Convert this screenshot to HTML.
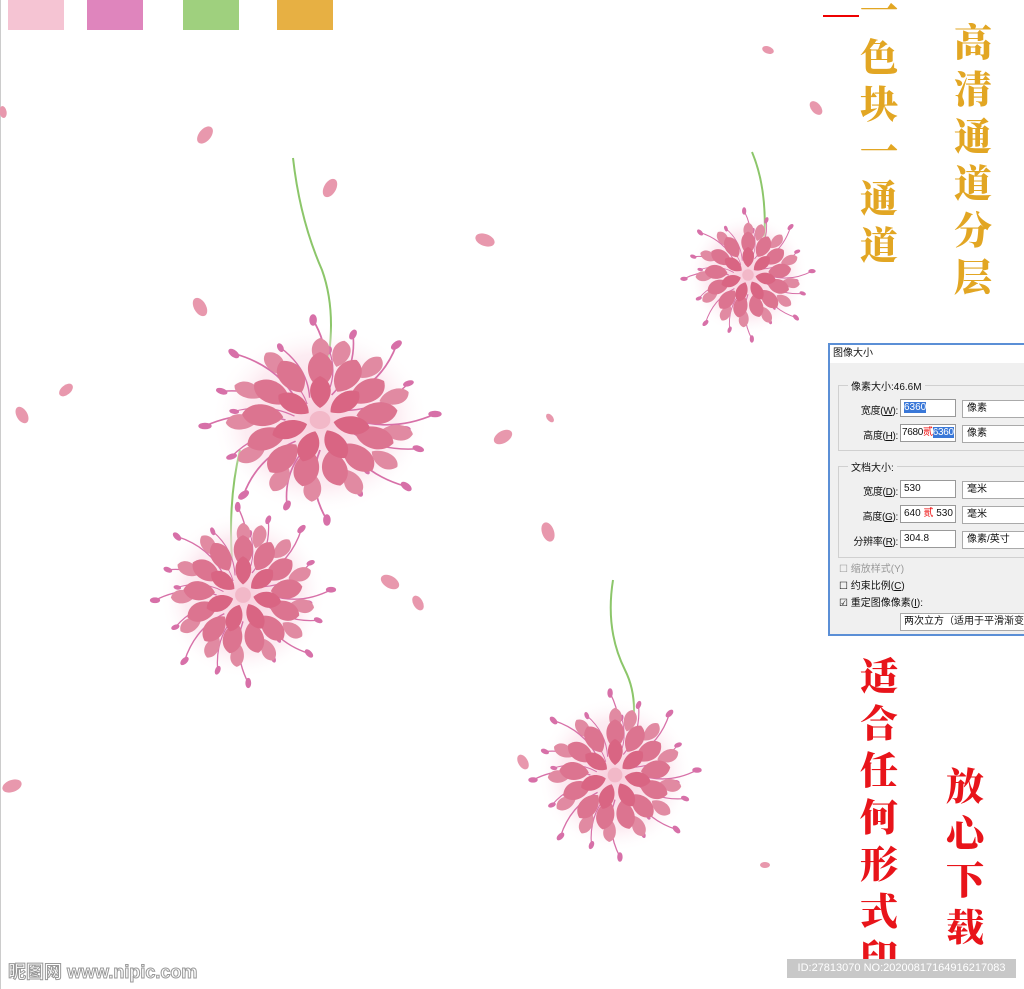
<!DOCTYPE html>
<html><head><meta charset="utf-8"><style>
body{margin:0;width:1024px;height:989px;overflow:hidden;background:#fff;position:relative;font-family:"Liberation Sans","Noto Sans CJK SC",sans-serif}
.sw{position:absolute;top:0;height:30px;width:56px}
.col{position:absolute;font-family:"Noto Serif CJK SC",serif;font-weight:900;font-size:38px;line-height:47px;width:46px;text-align:center}
.dlg{position:absolute;left:828px;top:343px;width:200px;height:293px;background:#f0f0f0;border:2px solid #5b8fd6;box-sizing:border-box;font-size:10px;color:#111;white-space:nowrap}
.dlg .t{background:#fff;height:18px;line-height:18px;padding-left:3px}
.fs{position:absolute;border:1px solid #d0d0d0}
.lg{position:absolute;background:#f0f0f0;padding:0 3px}
.lb{position:absolute;text-align:right;width:65px;letter-spacing:-0.3px}
.in{position:absolute;background:#fff;border:1px solid #999;height:18px;line-height:16px;padding-left:3px;box-sizing:border-box;overflow:hidden}
.sel{position:absolute;background:#fff;border:1px solid #aaa;height:18px;line-height:16px;padding-left:4px;box-sizing:border-box;width:70px}
.hl{background:#3a78d8;color:#fff}
</style></head><body>
<div class="sw" style="left:8px;background:#f5c4d3"></div>
<div class="sw" style="left:87px;background:#df85bd"></div>
<div class="sw" style="left:183px;background:#9fd07e"></div>
<div class="sw" style="left:277px;background:#e7b043"></div>
<div style="position:absolute;left:823px;top:15px;width:36px;height:2px;background:#e00"></div>
<div style="position:absolute;left:0;top:0;width:1px;height:989px;background:#ccc"></div>

<svg width="1024" height="989" style="position:absolute;left:0;top:0">
<defs>
<radialGradient id="gl"><stop offset="0" stop-color="#f7c8d8" stop-opacity=".9"/><stop offset=".7" stop-color="#fbe0ea" stop-opacity=".6"/><stop offset="1" stop-color="#fff" stop-opacity="0"/></radialGradient>
<g id="fl">
<circle r="95" fill="url(#gl)"/>
<g stroke="#d770a8" stroke-width="1.6" fill="#d770a8">
<g id="sp"><path d="M0 -30 Q12 -65 -6 -100" fill="none"/><ellipse cx="-6" cy="-100" rx="2.5" ry="5"/></g>
<use href="#sp" transform="rotate(22) scale(.9)"/><use href="#sp" transform="rotate(45)"/><use href="#sp" transform="rotate(68) scale(.85)"/><use href="#sp" transform="rotate(90)"/><use href="#sp" transform="rotate(112) scale(.9)"/><use href="#sp" transform="rotate(135)"/><use href="#sp" transform="rotate(158) scale(.8)"/><use href="#sp" transform="rotate(180)"/><use href="#sp" transform="rotate(202) scale(.9)"/><use href="#sp" transform="rotate(225)"/><use href="#sp" transform="rotate(248) scale(.85)"/><use href="#sp" transform="rotate(270)"/><use href="#sp" transform="rotate(292) scale(.9)"/><use href="#sp" transform="rotate(315)"/><use href="#sp" transform="rotate(338) scale(.8)"/>
<use href="#sp" transform="rotate(10) scale(.7)"/><use href="#sp" transform="rotate(100) scale(.75)"/><use href="#sp" transform="rotate(190) scale(.7)"/><use href="#sp" transform="rotate(280) scale(.75)"/><use href="#sp" transform="rotate(-35) scale(.65)"/><use href="#sp" transform="rotate(145) scale(.65)"/>
</g>
<g fill="#e18aa2">
<g id="p3"><path d="M0 -55 C10 -62 12 -78 0 -82 C-10 -78 -9 -62 0 -55Z"/></g>
<use href="#p3" transform="rotate(15)"/><use href="#p3" transform="rotate(40)"/><use href="#p3" transform="rotate(70)"/><use href="#p3" transform="rotate(100)"/><use href="#p3" transform="rotate(125)"/><use href="#p3" transform="rotate(155)"/><use href="#p3" transform="rotate(185)"/><use href="#p3" transform="rotate(210)"/><use href="#p3" transform="rotate(240)"/><use href="#p3" transform="rotate(268)"/><use href="#p3" transform="rotate(295)"/><use href="#p3" transform="rotate(325)"/>
</g>
<g fill="#dc7490">
<g id="pe"><path d="M0 -32 C14 -40 16 -62 0 -68 C-15 -62 -13 -40 0 -32Z"/></g>
<use href="#pe" transform="rotate(28)"/><use href="#pe" transform="rotate(55)"/><use href="#pe" transform="rotate(82)"/><use href="#pe" transform="rotate(110)"/><use href="#pe" transform="rotate(138)"/><use href="#pe" transform="rotate(165)"/><use href="#pe" transform="rotate(193)"/><use href="#pe" transform="rotate(220)"/><use href="#pe" transform="rotate(248)"/><use href="#pe" transform="rotate(275)"/><use href="#pe" transform="rotate(303)"/><use href="#pe" transform="rotate(330)"/>
</g>
<g fill="#d96583">
<g id="p2"><path d="M0 -12 C12 -20 13 -38 0 -44 C-12 -38 -11 -20 0 -12Z"/></g>
<use href="#p2" transform="rotate(50)"/><use href="#p2" transform="rotate(100)"/><use href="#p2" transform="rotate(150)"/><use href="#p2" transform="rotate(200)"/><use href="#p2" transform="rotate(250)"/><use href="#p2" transform="rotate(305)"/>
</g>
<circle r="9" fill="#f2b8c8"/>
</g>
<ellipse id="pt" rx="10" ry="6" fill="#e898ad"/>
</defs>
<g fill="none" stroke="#8cc66a" stroke-width="2">
<path d="M293 158 Q300 220 322 270 Q340 320 322 390"/>
<path d="M240 450 Q228 500 232 560"/>
<path d="M752 152 Q768 190 764 245"/>
<path d="M613 580 Q605 630 625 670 Q640 700 630 740"/>
</g>
<use href="#fl" transform="translate(320 420) scale(1.15,1.0)"/>
<use href="#fl" transform="translate(243 595) scale(0.88)"/>
<use href="#fl" transform="translate(748 275) scale(0.64)"/>
<use href="#fl" transform="translate(615 775) scale(0.82)"/>
<use href="#pt" transform="translate(205 135) rotate(-50)"/>
<use href="#pt" transform="translate(330 188) rotate(-60)"/>
<use href="#pt" transform="translate(485 240) rotate(20)"/>
<use href="#pt" transform="translate(200 307) rotate(60)"/>
<use href="#pt" transform="translate(66 390) rotate(-40) scale(.8)"/>
<use href="#pt" transform="translate(22 415) rotate(60) scale(.9)"/>
<use href="#pt" transform="translate(503 437) rotate(-30)"/>
<use href="#pt" transform="translate(548 532) rotate(70)"/>
<use href="#pt" transform="translate(390 582) rotate(30)"/>
<use href="#pt" transform="translate(418 603) rotate(60) scale(.8)"/>
<use href="#pt" transform="translate(523 762) rotate(60) scale(.8)"/>
<use href="#pt" transform="translate(12 786) rotate(-20)"/>
<use href="#pt" transform="translate(768 50) rotate(20) scale(.6)"/>
<use href="#pt" transform="translate(816 108) rotate(50) scale(.8)"/>
<use href="#pt" transform="translate(550 418) rotate(50) scale(.5)"/>
<use href="#pt" transform="translate(765 865) scale(.5)"/>
<use href="#pt" transform="translate(3 112) rotate(80) scale(.6)"/>
</svg>

<div class="col" style="left:856px;top:-16px;color:#e2a623">一<br>色<br>块<br>一<br>通<br>道</div>
<div class="col" style="left:950px;top:16px;color:#e2a623">高<br>清<br>通<br>道<br>分<br>层</div>
<div class="col" style="left:856px;top:650px;color:#e8141a">适<br>合<br>任<br>何<br>形<br>式<br>印</div>
<div class="col" style="left:942px;top:760px;color:#e8141a">放<br>心<br>下<br>载</div>

<div class="dlg">
<div class="t">图像大小</div>
<div class="fs" style="left:8px;top:40px;width:190px;height:64px"></div>
<div class="lg" style="left:18px;top:33px">像素大小:46.6M</div>
<div class="lb" style="left:3px;top:57px">宽度(<u>W</u>):</div><div class="in" style="left:70px;top:54px;width:56px"><span class="hl">6360</span></div><div class="sel" style="left:132px;top:55px">像素</div>
<div class="lb" style="left:3px;top:82px">高度(<u>H</u>):</div><div class="in" style="left:70px;top:79px;width:56px;padding-left:1px;letter-spacing:-0.3px">7680<span style="color:#e00">贰</span><span class="hl">6360</span></div><div class="sel" style="left:132px;top:80px">像素</div>
<div class="fs" style="left:8px;top:121px;width:190px;height:90px"></div>
<div class="lg" style="left:18px;top:114px">文档大小:</div>
<div class="lb" style="left:3px;top:138px">宽度(<u>D</u>):</div><div class="in" style="left:70px;top:135px;width:56px">530</div><div class="sel" style="left:132px;top:136px">毫米</div>
<div class="lb" style="left:3px;top:163px">高度(<u>G</u>):</div><div class="in" style="left:70px;top:160px;width:56px">640 <span style="color:#e00">贰</span> 530</div><div class="sel" style="left:132px;top:161px">毫米</div>
<div class="lb" style="left:3px;top:188px">分辨率(<u>R</u>):</div><div class="in" style="left:70px;top:185px;width:56px">304.8</div><div class="sel" style="left:132px;top:186px">像素/英寸</div>
<div style="position:absolute;left:9px;top:215px;color:#999">☐ 缩放样式(Y)</div>
<div style="position:absolute;left:9px;top:232px">☐ 约束比例(<u>C</u>)</div>
<div style="position:absolute;left:9px;top:249px">☑ 重定图像像素(<u>I</u>):</div>
<div class="in" style="left:70px;top:268px;width:130px;border-color:#aaa">两次立方（适用于平滑渐变</div>
</div>

<div style="position:absolute;left:8px;top:958px;font-size:18px;font-weight:bold;color:#fff;-webkit-text-stroke:1px #999">昵图网 www.nipic.com</div>
<div style="position:absolute;left:787px;top:959px;width:229px;height:19px;background:#c8c8c8;color:#fff;font-size:11px;line-height:19px;text-align:center">ID:27813070 NO:20200817164916217083</div>
</body></html>
